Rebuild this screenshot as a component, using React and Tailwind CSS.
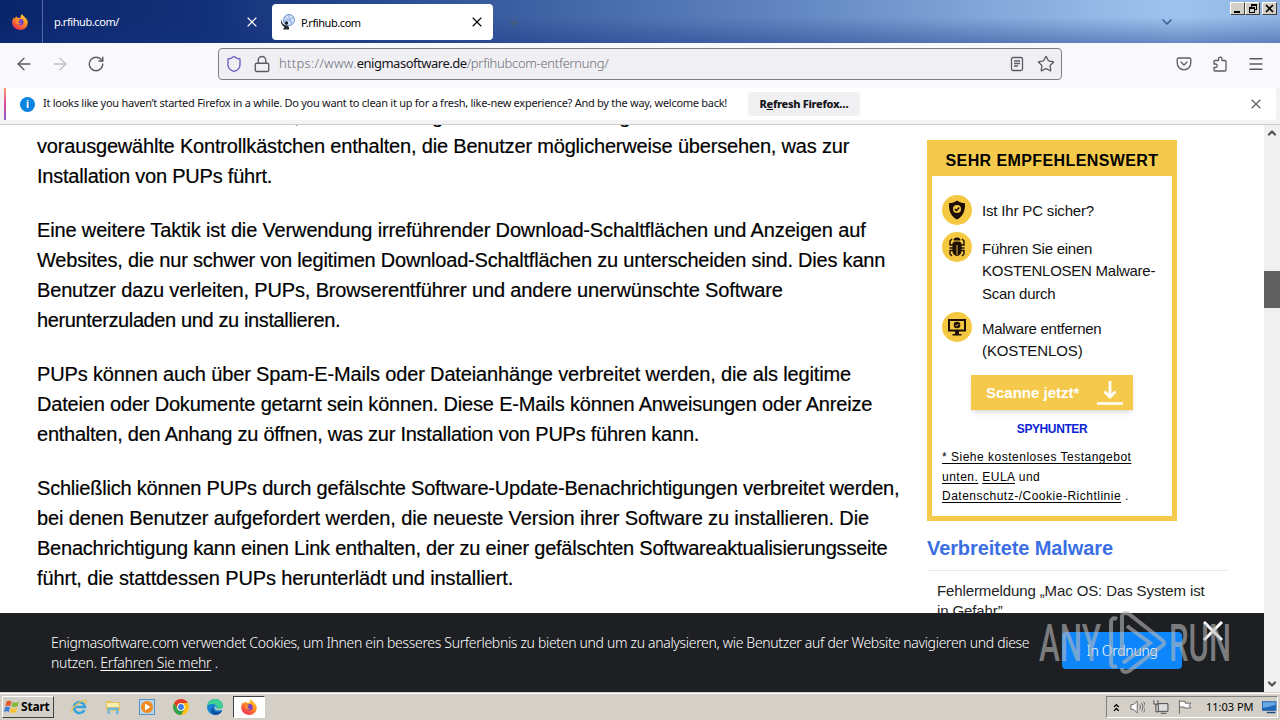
import {ArrowLeft, ArrowRight, ChevronDown, Lock, Menu, RotateCw, Shield, Star, X} from "lucide-react";

const PARAGRAPHS = [
    [
        ["Installation anderer Software, die im Bundling enthalten sind. Einige können", "tracking-[0.08px]"],
        ["vorausgewählte Kontrollkästchen enthalten, die Benutzer möglicherweise übersehen, was zur", "tracking-[-0.18px]"],
        ["Installation von PUPs führt.", "tracking-[-0.22px]"],
    ],
    [
        ["Eine weitere Taktik ist die Verwendung irreführender Download-Schaltflächen und Anzeigen auf", "tracking-[-0.15px]"],
        ["Websites, die nur schwer von legitimen Download-Schaltflächen zu unterscheiden sind. Dies kann", "tracking-[-0.21px]"],
        ["Benutzer dazu verleiten, PUPs, Browserentführer und andere unerwünschte Software", "tracking-[-0.155px]"],
        ["herunterzuladen und zu installieren.", "tracking-[-0.38px]"],
    ],
    [
        ["PUPs können auch über Spam-E-Mails oder Dateianhänge verbreitet werden, die als legitime", "tracking-[-0.15px]"],
        ["Dateien oder Dokumente getarnt sein können. Diese E-Mails können Anweisungen oder Anreize", "tracking-[-0.185px]"],
        ["enthalten, den Anhang zu öffnen, was zur Installation von PUPs führen kann.", "tracking-[-0.24px]"],
    ],
    [
        ["Schließlich können PUPs durch gefälschte Software-Update-Benachrichtigungen verbreitet werden,", "tracking-[-0.205px]"],
        ["bei denen Benutzer aufgefordert werden, die neueste Version ihrer Software zu installieren. Die", "tracking-[-0.125px]"],
        ["Benachrichtigung kann einen Link enthalten, der zu einer gefälschten Softwareaktualisierungsseite", "tracking-[-0.23px]"],
        ["führt, die stattdessen PUPs herunterlädt und installiert.", "tracking-[-0.13px]"],
    ],
];

function FirefoxLogo({ className }) {
    return (
        <svg viewBox="0 0 16 16" className={className}>
            <defs>
                <linearGradient id="fox" x1="0.8" y1="0" x2="0.2" y2="1">
                    <stop offset="0" stopColor="#ffd93b" />
                    <stop offset="0.45" stopColor="#ff8a1e" />
                    <stop offset="1" stopColor="#f0265a" />
                </linearGradient>
            </defs>
            <path d="M10 0c.5 1.800 2 2 3 3.400 1.600 1 2.800 3 2.800 5.400A7.700 7.200 0 0 1 8 16 7.700 7.200 0 0 1 .2 8.600c0-2 .5-3.800 1.600-5.100l.6 1L4.400 2.600 5.500 3.800l3 .2C8.400 2.400 9 1 10 0z" fill="url(#fox)" />
            <circle cx="8.300" cy="8.200" r="3.300" fill="#7540c9" />
            <path d="M4 5.500c2-.8 3.700-.1 4.500 1-1.500 0-2 .6-2 1.400 0 1.200 1.500 1.900 3 1.200-.8 2-4.500 2.200-5.300-.6z" fill="#ff8f2b" />
        </svg>
    );
}

function TabBar() {
    return (
        <div className="relative flex h-[43px] shrink-0 bg-[linear-gradient(to_bottom,transparent_40%,rgba(20,50,130,0.4)),linear-gradient(to_right,#0a246a_0px,#123078_200px,#3a5da0_500px,#6488c2_800px,#94b9e6_1100px,#9dc4ee_1180px,#8fb4e2_1280px)]">
            <div className="flex w-[43px] items-center justify-center border-r border-[#5169a0] pr-[3px]">
                <FirefoxLogo className="size-4" />
            </div>
            <div className="flex w-[229px] items-center pt-0.5 pr-3 pl-[11px] text-white">
                <span className="flex-1 text-[11px] tracking-[-0.43px]">p.rfihub.com/</span>
                <X className="-mt-0.5 size-4" strokeWidth={1.7} />
            </div>
            <div className="mt-1 flex h-9 w-[221px] items-center rounded bg-white pr-2 pl-2 text-black">
                <svg viewBox="0 0 16 16" className="size-4">
                    <circle cx="9" cy="6" r="5.500" fill="#d6e4f8" stroke="#6d8fd0" />
                    <path d="M5 3l7 6M8 1l4 9M4 7l9-3" stroke="#7fa2df" strokeWidth="0.800" />
                    <path d="M2 5c-1 3 1 6 5 6.500l2 1.500v2.500H3l1.500-2.500C1.500 11.500 0 8 2 5z" fill="#252530" />
                    <circle cx="6.500" cy="9" r="1.700" fill="#17202e" />
                </svg>
                <span className="ml-[5px] flex-1 pt-0.5 text-[11px] tracking-[-0.43px]">P.rfihub.com</span>
                <X className="size-4" strokeWidth={1.7} />
            </div>
            <div className="ml-[17px] flex w-3 items-center pt-0.5 text-[16px] font-semibold text-[#4a5c78]">+</div>
            <div className="flex flex-1 justify-end">
                <ChevronDown className="mt-3.5 mr-[55px] size-4 text-[#3d5f92]" strokeWidth={2.4} />
                <WindowButtons />
            </div>
        </div>
    );
}

function WindowButtons() {
    const button = "flex h-[13px] w-[15px] items-center justify-center border border-t-white border-l-white border-r-[#404040] border-b-[#404040] bg-[#d4d0c8]";
    return (
        <div className="mt-0.5 mr-[3px] flex">
            <div className={button}>
                <svg viewBox="0 0 11 11" className="size-[11px]"><path d="M2 8h6v2H2z" /></svg>
            </div>
            <div className={button}>
                <svg viewBox="0 0 11 11" className="size-[11px]" shapeRendering="crispEdges">
                    <path d="M4 1h6v6H8V6h1V3H5v1H4zM2 4h6v6H2zM3 6v3h4V6z" fillRule="evenodd" />
                </svg>
            </div>
            <div className="ml-0.5 flex">
                <div className={button}>
                    <svg viewBox="0 0 11 11" className="size-[11px]"><path d="M2 2l7 7M9 2l-7 7" stroke="#000" strokeWidth="1.700" /></svg>
                </div>
            </div>
        </div>
    );
}

function NavBar() {
    return (
        <div className="flex h-[45px] shrink-0 items-center bg-[#f9f9fb] pb-[3px] text-[#5b5b66]">
            <ArrowLeft className="ml-3.5 size-5" strokeWidth={1.6} />
            <ArrowRight className="ml-4 size-5 text-[#bfbfc4]" strokeWidth={1.6} />
            <RotateCw className="ml-[17px] size-[18px]" strokeWidth={1.9} />
            <div className="ml-[113px] flex h-8 w-[844px] items-center rounded border border-[#7c7c85] bg-[#f0f0f4] px-[6px]">
                <Shield className="size-[18px] text-[#6b5fc4]" strokeWidth={1.8} />
                <Lock className="ml-2.5 size-[18px]" strokeWidth={1.8} />
                <span className="ml-2 flex-1 text-[13px] font-light tracking-[-0.3px] whitespace-nowrap text-[#6d6d75]">
                    <span className="tracking-[0.3px]">https://www.</span>
                    <span className="font-normal tracking-[-0.48px] text-[#15141a]">enigmasoftware.de</span>/prfihubcom-entfernung/
                </span>
                <svg viewBox="0 0 16 16" className="size-4" fill="none" stroke="currentColor" strokeWidth="1.300">
                    <rect x="2.500" y="1.500" width="11" height="13" rx="1.500" />
                    <path d="M5 5h6M5 7.500h6M5 10h4" />
                </svg>
                <Star className="ml-3 size-[18px]" strokeWidth={1.8} />
            </div>
            <svg viewBox="0 0 16 16" className="ml-[114px] size-4" fill="none" stroke="currentColor" strokeWidth="1.300" strokeLinecap="round">
                <path d="M2.500 2h11a1.300 1.300 0 0 1 1.300 1.300V7A6.800 6.800 0 0 1 1.200 7V3.300A1.300 1.300 0 0 1 2.500 2z" />
                <path d="M5 6l3 3 3-3" />
            </svg>
            <svg viewBox="0 0 16 16" className="ml-5 size-4" fill="none" stroke="currentColor" strokeWidth="1.300" strokeLinejoin="round">
                <path d="M2 5.500a1 1 0 0 1 1-1h3.500V2.800a1.700 1.700 0 0 1 3.500 0v1.700H13a1 1 0 0 1 1 1V14a1 1 0 0 1-1 1H3a1 1 0 0 1-1-1v-2.500h1.500a1.700 1.700 0 0 0 0-3.500H2z" />
            </svg>
            <Menu className="ml-[19px] size-[18px]" strokeWidth={1.7} />
        </div>
    );
}

function NotificationBar() {
    return (
        <div className="h-[37px] shrink-0 border-b border-[#cccccc] bg-[#f3f3f5] pr-1 pl-1">
            <div className="flex h-8 items-center rounded bg-white pr-3">
                <div className="h-8 w-0.5 bg-gradient-to-b from-[#f59a6a] via-[#e0459f] to-[#9059c8]" />
                <div className="ml-3.5 flex size-[15px] items-center justify-center rounded-full bg-[#0a84e0] text-[10px] font-bold text-white">i</div>
                <span className="ml-2 w-[705px] pb-px text-[11px] tracking-[-0.267px] whitespace-nowrap text-[#15141a]">
                    It looks like you haven’t started Firefox in a while. Do you want to clean it up for a fresh, like-new experience? And by the way, welcome back!
                </span>
                <button className="h-6 w-28 rounded bg-[#f0f0f2] text-[11px] font-extrabold tracking-[-0.3px] whitespace-nowrap text-[#15141a]">
                    R<span className="underline">e</span>fresh Firefox…
                </button>
                <div className="flex-1" />
                <X className="size-4 text-[#5b5b66]" strokeWidth={1.7} />
            </div>
        </div>
    );
}

function Article() {
    return (
        <div className="-mt-[24px] ml-[37px] w-[890px] shrink-0 font-['Liberation_Sans',Arial,sans-serif] text-[20px] leading-[30px] text-black [-webkit-text-stroke:0.2px_#000]">
            {PARAGRAPHS.map((lines, index) => (
                <p key={index} className="mb-6">
                    {lines.map(([text, tracking]) => (
                        <span key={text} className={`block whitespace-nowrap ${tracking}`}>{text}</span>
                    ))}
                </p>
            ))}
        </div>
    );
}

function StepIcon({ children }) {
    return (
        <div className="flex size-[30px] shrink-0 items-center justify-center rounded-full bg-[#f5c842]">
            <svg viewBox="0 0 20 20" className="size-5">{children}</svg>
        </div>
    );
}

function Sidebar() {
    return (
        <aside className="w-[300px] shrink-0 pt-[15px] font-['Liberation_Sans',Arial,sans-serif] text-black">
            <div className="h-[381px] w-[250px] border-[5px] border-t-0 border-[#f5c94b]">
                <div className="-mx-[5px] flex h-9 items-center justify-center bg-[#f5c94b] pt-[5px] text-[16px] font-bold tracking-[0.4px] whitespace-nowrap">
                    SEHR EMPFEHLENSWERT
                </div>
                <div className="px-2.5 pt-[19px] text-[15px] leading-[22.4px] text-[#111]">
                    <div className="flex h-[38px] gap-2.5">
                        <StepIcon>
                            <path d="M10 .5c2.500 2 5 2.500 8 2.700.3 7-1.500 13-8 16.300C3.500 16.200 1.700 10.200 2 3.200 5 3 7.500 2.500 10 .5z" fill="#1c0d05" />
                            <circle cx="10" cy="9" r="4" fill="#f5c842" />
                            <path d="M7.800 9l1.600 1.600L12.300 7.600" fill="none" stroke="#1c0d05" strokeWidth="1.500" />
                        </StepIcon>
                        <span className="pt-[5px] tracking-[-0.17px]">Ist Ihr PC sicher?</span>
                    </div>
                    <div className="flex h-20 gap-2.5">
                        <div className="-mt-px">
                            <StepIcon>
                                <path d="M6.500 3.500a3.500 3 0 0 1 7 0zM5.500 6l2-1.500h5l2 1.500v8a4.500 5 0 0 1-9 0z" fill="#1c0d05" />
                                <path d="M10 8v10" stroke="#f5c842" strokeWidth="0.900" />
                                <path d="M6 8H3V4l2-2M14 8h3V4l-2-2M6 11H2.500M14 11h3.500M6 13.500H3V17l2 2M14 13.500h3V17l-2 2" fill="none" stroke="#1c0d05" strokeWidth="1.400" />
                            </StepIcon>
                        </div>
                        <span className="pt-[5px] tracking-[-0.26px] whitespace-nowrap">Führen Sie einen<br />KOSTENLOSEN Malware-<br />Scan durch</span>
                    </div>
                    <div className="flex h-[62px] gap-2.5">
                        <div className="-mt-px">
                            <StepIcon>
                                <path d="M1 2h18v12.500h-7V17h2.500v1.500h-9V17H8v-2.500H1zM3 4v8.500h14V4z" fill="#1c0d05" fillRule="evenodd" />
                                <circle cx="10" cy="8" r="3.300" fill="#1c0d05" />
                                <path d="M8.500 8l1 1.200L11.600 7" fill="none" stroke="#f5c842" />
                            </StepIcon>
                        </div>
                        <span className="pt-[5px] tracking-[-0.29px] whitespace-nowrap">Malware entfernen<br /><span className="tracking-[-0.1px]">(KOSTENLOS)</span></span>
                    </div>
                </div>
                <div className="mx-auto flex h-[35px] w-[162px] items-center bg-[#f5c94b] pr-2.5 pl-[15px] shadow-md">
                    <span className="flex-1 pt-0.5 text-[15px] font-bold whitespace-nowrap text-white">Scanne jetzt*</span>
                    <svg viewBox="0 0 26 26" className="size-[26px]" fill="none" stroke="#fff" strokeWidth="2.700">
                        <path d="M13 1v16M7.500 11.500L13 17l5.500-5.500M0 23.500h26" />
                    </svg>
                </div>
                <div className="mt-2.5 text-center text-[12px] leading-[18px] font-bold tracking-[-0.4px] text-[#0b24d6]">SPYHUNTER</div>
                <div className="mt-2.5 ml-2.5 text-[12px] leading-[19.5px] tracking-[0.5px] whitespace-nowrap">
                    <span className="underline underline-offset-2">* Siehe kostenloses Testangebot</span><br />
                    <span className="underline underline-offset-2">unten.</span> <span className="underline underline-offset-2">EULA</span> und<br />
                    <span className="underline underline-offset-2">Datenschutz-/Cookie-Richtlinie</span> .
                </div>
            </div>
            <h3 className="mt-3 text-[20px] leading-[30px] font-bold tracking-[-0.1px] text-[#3c6fe4]">Verbreitete Malware</h3>
            <div className="mt-[7px] border-t border-[#e8e8e8] pt-[10px] pl-2.5 text-[15px] leading-[20px] tracking-[-0.11px] whitespace-nowrap text-[#222]">
                Fehlermeldung „Mac OS: Das System ist<br />in Gefahr”
            </div>
        </aside>
    );
}

function CookieBanner() {
    return (
        <div className="absolute bottom-0 left-0 flex h-[79px] w-[1264px] bg-[#1d1f23] text-[14px] text-white">
            <p className="w-[1011px] pt-5 pl-[51px] leading-5 font-light tracking-[-0.32px] whitespace-nowrap">
                Enigmasoftware.com verwendet Cookies, um Ihnen ein besseres Surferlebnis zu bieten und um zu analysieren, wie Benutzer auf der Website navigieren und diese<br />
                <span className="tracking-[-0.22px]">nutzen. <span className="underline underline-offset-2">Erfahren Sie mehr</span> .</span>
            </p>
            <button className="mt-[19px] ml-[51px] h-[37px] w-[120px] rounded-sm bg-[#0d86fb] font-light tracking-[-0.3px]">In Ordnung</button>
            <svg viewBox="0 0 20 20" className="mt-2 ml-[21px] size-5" stroke="#fff" strokeWidth="3"><path d="M1 1l18 18M19 1L1 19" /></svg>
        </div>
    );
}

function Watermark() {
    return (
        <svg viewBox="0 0 200 70" className="pointer-events-none absolute right-[45px] bottom-[14px] h-[70px] w-[200px]" fill="#b8b8b8" opacity="0.6">
            <g fontFamily="Roboto" fontWeight="500" fontSize="52">
                <text x="4" y="53" textLength="62" lengthAdjust="spacingAndGlyphs">ANY</text>
                <text x="134" y="53" textLength="62" lengthAdjust="spacingAndGlyphs">RUN</text>
            </g>
            <g fill="none" stroke="#b8b8b8" strokeWidth="4">
                <path d="M82 11c-4-2-6 0-6 4v39c0 4 2 6 6 4" />
                <path d="M87 48V9c0-4 3-5 7-3l33 26c3 2 3 4 0 6L94 63c-4 2-7 1-7-3M92 18l23 17L88 55" />
            </g>
        </svg>
    );
}

function Scrollbar() {
    return (
        <div className="flex w-4 flex-col items-center bg-[#f0f0f0] text-[#505050]">
            <ChevronDown className="mt-0.5 size-3 rotate-180" strokeWidth={4.5} />
            <div className="mt-[132px] h-[37px] w-4 bg-[#606060]" />
            <div className="flex-1" />
            <ChevronDown className="mb-0.5 size-3" strokeWidth={4.5} />
        </div>
    );
}

function Taskbar() {
    return (
        <div className="flex h-7 shrink-0 items-center border-t border-[#d4d0c8] bg-[#d4d0c8] pt-px shadow-[inset_0_1px_0_#fff]">
            <div className="ml-0.5 flex h-[22px] w-[52px] items-center gap-px border border-t-white border-l-white border-r-[#404040] border-b-[#404040] pl-px text-[12px] font-bold tracking-[-0.2px] text-black">
                <svg viewBox="0 0 16 16" className="size-4">
                    <path d="M2.500 2.500c2-1 3.500-1 5 0L6.300 7.200c-1.500-1-3-1-5 0z" fill="#e5562b" />
                    <path d="M8.500 3c2 1 4 1 6.500-.5L13.700 7.300c-2 1-4.300 1-6.300.2z" fill="#86b83a" />
                    <path d="M1 8.300c2-1 3.500-1 5 0L4.700 13c-1.500-1-3-1-4.700 0z" fill="#3f7fd5" />
                    <path d="M7 8.700c2 1 4 1 6.300-.3L12 13c-2 1.200-4.300 1.200-6.300 0z" fill="#f6c232" />
                </svg>
                Start
            </div>
            <div className="ml-[17px] flex items-center gap-[18px]">
                <svg viewBox="0 0 16 16" className="size-4" fill="none">
                    <path d="M13.500 11A5.500 5.500 0 1 1 14 8H4" stroke="#37a3de" strokeWidth="2.600" />
                    <path d="M1 14C-1 10 9 1 15 1.500c1 1-.5 3-1 4" stroke="#edc24b" strokeWidth="1.300" />
                </svg>
                <svg viewBox="0 0 16 16" className="size-4">
                    <path d="M1 2h5l1 1h8v9H1z" fill="#e6c35f" />
                    <path d="M2 4h12v4H2z" fill="#fbefb0" />
                    <path d="M2.500 8.500h11V15H11v-4H5v4H2.500z" fill="#73b8dd" />
                </svg>
                <svg viewBox="0 0 16 16" className="size-4">
                    <rect x="0.500" y="0.500" width="15" height="15" fill="#b9d5ec" stroke="#5b92c0" />
                    <circle cx="8" cy="8" r="6" fill="#f08a1c" />
                    <path d="M6 4.500l5.500 3.500L6 11.500z" fill="#fff" />
                </svg>
                <svg viewBox="0 0 16 16" className="size-4">
                    <circle cx="8" cy="8" r="8" fill="#fbc116" />
                    <path d="M1.100 4A8 8 0 0 1 14.900 4H8a4 4 0 0 0-3.500 6z" fill="#e33b2e" />
                    <path d="M1.100 4A8 8 0 0 0 8 16l3.500-6a4 4 0 0 1-7 0z" fill="#2da14c" />
                    <circle cx="8" cy="8" r="3.800" fill="#fff" />
                    <circle cx="8" cy="8" r="2.900" fill="#3d7de8" />
                </svg>
                <svg viewBox="0 0 16 16" className="size-4">
                    <circle cx="8" cy="8" r="8" fill="#1683d1" />
                    <path d="M0 7C1 2 5 0 8 0c5 0 8 3.500 8 7 0 3-4 4-6 2.500.5-4-5-6.500-10-2.500z" fill="#3fcf91" />
                    <path d="M6 9c0 4 4 5 9 3-2 3.500-5 4-7 4-4-1-5-6-2-8z" fill="#0e4d9d" />
                    <path d="M8 7c-1 3 1 5 6 4l2 .5V8c-1 2-4 3-6 1.500z" fill="#d4d0c8" />
                </svg>
            </div>
            <div className="ml-2.5 flex h-[22px] w-8 items-center justify-center border border-t-[#404040] border-l-[#404040] border-r-white border-b-white bg-white">
                <FirefoxLogo className="size-4" />
            </div>
            <div className="flex-1" />
            <div className="mr-0.5 flex h-[22px] w-[172px] items-center border border-t-[#808080] border-l-[#808080] border-r-white border-b-white pl-1.5 text-[11px] text-black">
                <svg viewBox="0 0 7 9" className="h-[9px] w-[7px]" fill="none" stroke="#000" strokeWidth="1.400"><path d="M1 4l2.500-2.500L6 4M1 8l2.500-2.500L6 8" /></svg>
                <svg viewBox="0 0 16 16" className="ml-2.5 size-4" fill="#fff" stroke="#666"><path d="M1 5.500h2.500L7.500 2v12l-4-3.500H1z" /><path d="M10 5.500c1 1.500 1 3.500 0 5M12 4c2 2.500 2 5.500 0 8M14 2.500c2.500 3 2.500 8 0 11" fill="none" /></svg>
                <svg viewBox="0 0 16 16" className="ml-2 size-4" fill="#ddd" stroke="#444"><path d="M5.500 4.500h10v8h-10zM8 14.500h6M1 1v4h4V1M3 5v8h3" /></svg>
                <svg viewBox="0 0 16 16" className="ml-2 size-4" fill="#fff" stroke="#666"><path d="M2.500 1v14M2.500 2h6v2h6l-2 2.500 2 2.500h-7V8h-5" /></svg>
                <span className="ml-3.5 whitespace-nowrap">11:03 PM</span>
                <svg viewBox="0 0 16 16" className="ml-2 size-4"><path d="M0 2h15v10H0z" fill="#2166b5" /><path d="M1 3h13v3L1 9z" fill="#69a6e4" /><path d="M5 13h9v1.500H5z" fill="#234a7c" /></svg>
            </div>
        </div>
    );
}

function App() {
    return (
        <div className="flex h-[720px] w-[1280px] flex-col overflow-hidden bg-white font-['Noto_Sans',Tahoma,sans-serif]">
            <TabBar />
            <NavBar />
            <NotificationBar />
            <main className="relative flex min-h-0 flex-1">
                <div className="flex h-[567px] w-[1264px] overflow-hidden">
                    <Article />
                    <Sidebar />
                </div>
                <Scrollbar />
                <CookieBanner />
                <Watermark />
            </main>
            <Taskbar />
        </div>
    );
}

export default App;
